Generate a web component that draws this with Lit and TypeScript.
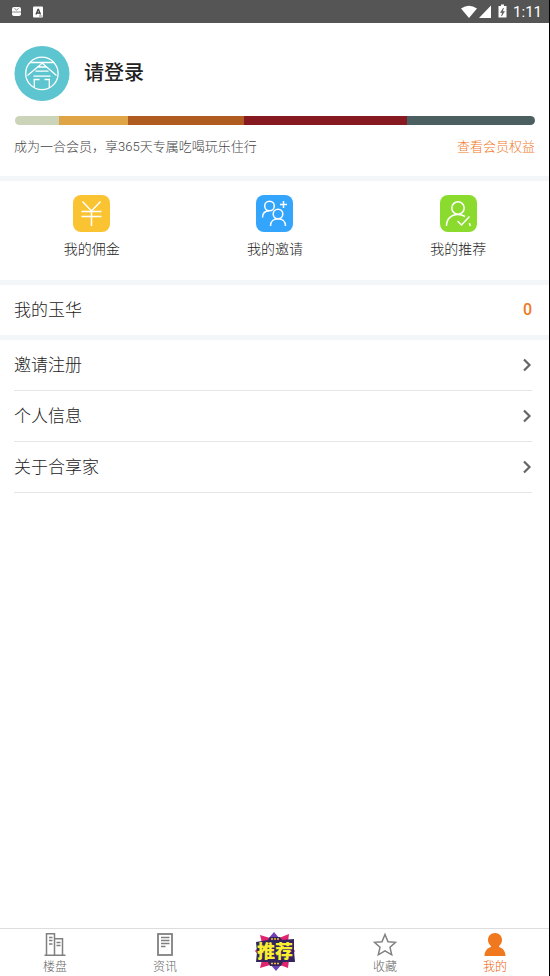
import { LitElement, html, svg, css } from "lit";
import { customElement, state } from "lit/decorators.js";

const logo = svg`
  <circle cx="27.5" cy="27.5" r="27.5" fill="#5cc5cf"/>
  <g fill="none" stroke="#fff" stroke-width="1.3">
    <circle cx="27.4" cy="27.4" r="16.2"/>
    <path d="M15.500 16.500H39.300M28.500 16.500L13 29.500M27 16.500L42 29.500M22.500 21H32.500M21 25.200H34M19 30.200H36M19.800 33V42M34.800 33V42M19 33.500H25M30 33.500H35.500"/>
  </g>`;

const feature: Record<string, unknown> = {
  coin: svg`<rect width="37" height="37" rx="8" fill="#f9c332"/>
    <g fill="none" stroke="#fff" stroke-width="1.500"><path d="M9.500 6.500L18.500 16L27.500 6.500M18.500 16V31M8.500 16.500H28.500M8.500 21.500H28.500"/></g>`,
  invite: svg`<rect width="37" height="37" rx="8" fill="#33a5fd"/>
    <g fill="none" stroke="#fff" stroke-width="1.500">
      <circle cx="13.500" cy="11" r="4.800"/><path d="M6.500 22.500C6.500 18.500 9 16 13 15.800"/>
      <circle cx="22" cy="19" r="4.800"/><path d="M14.500 31C14.500 26 18 23.800 22 23.800S29.500 26 29.500 31M27.500 6V13M24 9.500H31"/>
    </g>`,
  recommend: svg`<rect width="37" height="37" rx="8" fill="#8bdb2f"/>
    <g fill="none" stroke="#fff" stroke-width="1.500">
      <circle cx="18" cy="13" r="6.200"/><path d="M6.500 31C6.500 24 11 19.500 18 19.500C21 19.500 23 20.300 25 21.500M17.500 26L21.500 30L29.500 21.500M29.300 28L30.300 31"/>
    </g>`,
};

const tabIcons: Record<string, unknown> = {
  building: svg`<g fill="none" stroke="#808080" stroke-width="1.500">
      <path d="M1.500 23.200H22.500M3.500 23.200V1.800H11.500V23.200M11.500 6.800H19.500V23.200"/>
      <path d="M6 5.500H9.500M6 8.500H9.500M6 12H9.500M13.500 10.500H17.500M13.500 13.500H17.500" stroke-width="1.400"/></g>`,
  news: svg`<g fill="none" stroke="#808080" stroke-width="1.800">
      <rect x="5" y="2" width="14" height="21"/>
      <path d="M8 5.500H16.500M8 8.500H16.500M8 11.500H16.500M8 14.500H12.500" stroke-width="1.400"/></g>`,
  star: svg`<path d="M12 2.500L15 9.700L22.500 10.300L17 15.300L18.700 22.800L12 18.800L5.300 22.800L7 15.300L1.500 10.300L9 9.700Z" fill="none" stroke="#808080" stroke-width="1.500"/>`,
  person: svg`<path d="M12 1C16.200 1 19 4 19 7.800C19 10.500 18 12.500 16 14V15C20 16 22.500 19.500 22.500 24H1.500C1.500 19.500 4 16 8 15V14C6 12.500 5 10.500 5 7.800C5 4 7.800 1 12 1Z" fill="#f0781f"/>`,
};

@customElement("app-root")
export class AppRoot extends LitElement {
  @state() private active = "我的";

  private levels = [
    { color: "#cbd3b9", share: 44 },
    { color: "#dfa445", share: 69 },
    { color: "#b05b20", share: 116 },
    { color: "#871a20", share: 163 },
    { color: "#4b5f60", share: 128 },
  ];

  private features = [
    { icon: "coin", label: "我的佣金" },
    { icon: "invite", label: "我的邀请" },
    { icon: "recommend", label: "我的推荐" },
  ];

  private links = ["邀请注册", "个人信息", "关于合享家"];

  private tabs = [
    { icon: "building", label: "楼盘" },
    { icon: "news", label: "资讯" },
    { icon: "badge", label: "推荐" },
    { icon: "star", label: "收藏" },
    { icon: "person", label: "我的" },
  ];

  static styles = css`
    :host {
      display: flex;
      flex-direction: column;
      position: relative;
      min-height: 100vh;
      background: #fff;
      color: #222;
      font-family: Roboto, "Noto Sans CJK SC", sans-serif;
      font-weight: 300;
    }
    :host::after {
      content: "";
      position: absolute;
      top: 0;
      right: 0;
      bottom: 0;
      width: 1px;
      background: #000;
    }
    svg { display: block; flex: none; }
    a { color: inherit; text-decoration: none; }
    button {
      border: 0;
      padding: 0;
      background: none;
      color: inherit;
      font: inherit;
      cursor: pointer;
    }
    .status {
      display: flex;
      align-items: center;
      justify-content: space-between;
      height: 23px;
      padding: 0 8px 0 11px;
      background: #555;
      color: #fff;
      font: 400 15px/23px Roboto, sans-serif;
    }
    .group { display: flex; align-items: center; }
    .notices { gap: 11px; }
    .time { margin-left: 6px; padding-top: 1px; }
    main { flex: 1; }
    section { border-bottom: 5px solid #f2f6f9; }
    .profile { padding: 23px 15px 19px 14px; }
    .user { display: flex; align-items: center; gap: 14px; }
    h1 {
      margin: 0;
      padding-bottom: 2px;
      color: #222;
      font-size: 20px;
      line-height: 28px;
      font-weight: 500;
    }
    .levels {
      display: flex;
      height: 9px;
      margin: 15px 0 12px 1px;
      border-radius: 5px;
      overflow: hidden;
    }
    .member {
      display: flex;
      justify-content: space-between;
      font-size: 13px;
      line-height: 20px;
      color: #444;
    }
    .member p { margin: 0; }
    .member a { color: #f0781f; }
    .features {
      display: grid;
      grid-template-columns: repeat(3, 1fr);
      padding: 14px 0 20px;
    }
    .feature {
      display: flex;
      flex-direction: column;
      align-items: center;
      gap: 6px;
      font-size: 14px;
      line-height: 22px;
    }
    .row {
      display: flex;
      align-items: center;
      justify-content: space-between;
      height: 50px;
      font-size: 17px;
      line-height: 24px;
    }
    .label { padding-bottom: 1px; }
    .balance { padding: 0 18px 0 14px; }
    .amount { color: #f0781f; font-size: 16px; font-weight: 500; }
    .menu { margin: 0; padding: 0 18px 0 14px; list-style: none; }
    .menu li { border-bottom: 1px solid #e5e5e5; }
    .tabs {
      display: grid;
      grid-template-columns: repeat(5, 1fr);
      height: 47px;
      border-top: 1px solid #ddd;
    }
    .tab {
      display: flex;
      flex-direction: column;
      align-items: center;
      gap: 1px;
      padding-top: 3px;
      color: #666;
      font-size: 12px;
      line-height: 18px;
    }
    .tab.active { color: #f0600a; }
    .badge {
      font-size: 18px;
      font-weight: 900;
    }
  `;

  private renderTab(tab: { icon: string; label: string }) {
    const select = () => (this.active = tab.label);
    if (tab.icon === "badge") {
      return html`<button class="tab" @click=${select}>
        <svg width="42" height="40" viewBox="0 0 42 40">
          <path d="M6 3L16 6H25L35 2L34 10L41 19L35 28L34 36L26 33H16L6 36L8 28L1 19L8 11Z" fill="#e0246e"/>
          <path d="M20 0L26 7H14ZM22 39L16 32H28Z" fill="#6d43b5"/>
          <path d="M2 10L14 8L16 5H26L28 8L40 7L40 19L41 30L29 30L27 34H16L14 30L2 30L3 20Z" fill="#33245e"/>
          <path d="M17 7H25M17 31.500H26" stroke="#f3c13a" stroke-width="1.500" stroke-dasharray="2 1"/>
          <text class="badge" x="21" y="26" text-anchor="middle" fill="#f8ee32">推荐</text>
        </svg>
      </button>`;
    }
    return html`<button class="tab ${this.active === tab.label ? "active" : ""}" @click=${select}>
      <svg width="24" height="25" viewBox="0 0 24 25">${tabIcons[tab.icon]}</svg>
      <span>${tab.label}</span>
    </button>`;
  }

  render() {
    return html`
      <header class="status">
        <div class="group notices">
          <svg width="11" height="12" viewBox="0 0 11 12"><rect x="1" y="1" width="9" height="9" rx="2" fill="#fff"/><path d="M3.500 2.500L5.500 4L7.500 2.500M1 6H10" fill="none" stroke="#888"/></svg>
          <svg width="11" height="12" viewBox="0 0 11 12"><rect y="0.500" width="10" height="11" rx="1" fill="#fff"/><path d="M3 8.500L5 3.500H5.500L7.500 8.500M4 7H7" fill="none" stroke="#444" stroke-width="1.300"/><path d="M6 10H9.500" stroke="#888"/></svg>
        </div>
        <div class="group">
          <svg width="47" height="16" viewBox="0 0 47 16">
            <path d="M1 4.500Q9 -1 17 4.500L9 14ZM31 1.500V14H19Z" fill="#fff"/>
            <path d="M38.500 2H41V0.500H44V2H46.500V13.500H38.500Z" fill="#fff"/>
            <path d="M43.500 4L40.500 8.500H42.500L41.500 12L44.500 7.500H42.500Z" fill="#555" stroke="#555" stroke-width=".5"/>
          </svg>
          <span class="time">1:11</span>
        </div>
      </header>
      <main>
        <section class="profile">
          <div class="user">
            <svg width="56" height="55" viewBox="0 0 55 55">${logo}</svg>
            <h1>请登录</h1>
          </div>
          <div class="levels">
            ${this.levels.map((l) => html`<span style="flex: ${l.share}; background: ${l.color}"></span>`)}
          </div>
          <div class="member">
            <p>成为一合会员，享365天专属吃喝玩乐住行</p>
            <a href="#benefits">查看会员权益</a>
          </div>
        </section>
        <section class="features">
          ${this.features.map((f) => html`<button class="feature">
            <svg width="37" height="37" viewBox="0 0 37 37">${feature[f.icon]}</svg>
            <span>${f.label}</span>
          </button>`)}
        </section>
        <section class="row balance">
          <span class="label">我的玉华</span>
          <span class="amount">0</span>
        </section>
        <ul class="menu">
          ${this.links.map((label) => html`<li><a class="row" href="#">
            <span class="label">${label}</span>
            <svg width="10" height="14" viewBox="0 0 10 14"><path d="M2 1.500L7.500 7L2 12.500" fill="none" stroke="#666" stroke-width="2.200"/></svg>
          </a></li>`)}
        </ul>
      </main>
      <nav class="tabs">${this.tabs.map((t) => this.renderTab(t))}</nav>
    `;
  }
}
